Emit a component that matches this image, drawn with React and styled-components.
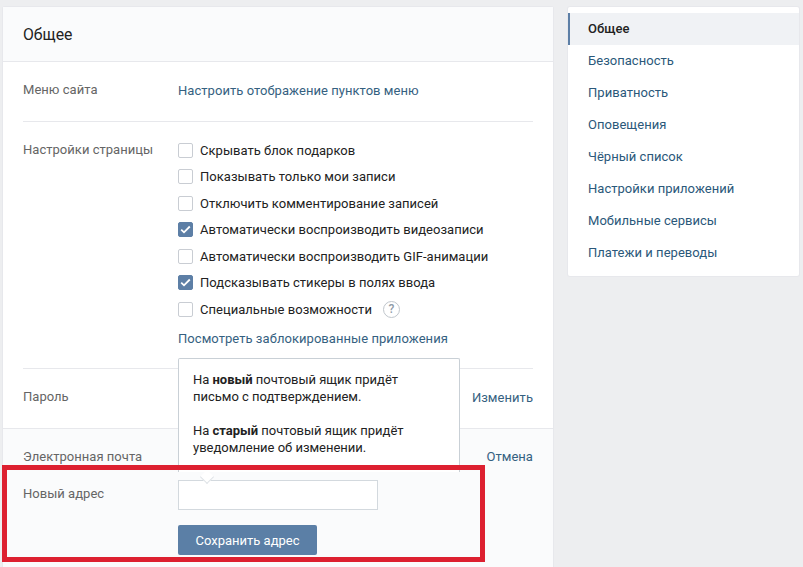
import React from "react";
import styled, { createGlobalStyle } from "styled-components";

const Global = createGlobalStyle`
  html, body { margin: 0; padding: 0; background: #edeef0; }
  body { font-family: Roboto, "Liberation Sans", sans-serif; font-size: 13px; -webkit-font-smoothing: antialiased; }
`;
const Page = styled.div`
  width: 803px; height: 567px; box-sizing: border-box; overflow: hidden; position: relative;
  display: flex; align-items: flex-start; gap: 15px; padding: 7px 4px 0 3px;
`;
const Card = styled.main`
  width: 550px; height: 560px; flex: none; background: #fff; border-radius: 2px 2px 0 0;
  box-shadow: 0 0 0 1px #e7e8ec; display: flex; flex-direction: column; position: relative;
`;
const Header = styled.header`
  height: 55px; box-sizing: border-box; flex: none; display: flex; align-items: center; padding: 1px 20px 0;
  background: #fafbfc; border-bottom: 1px solid #e7e8ec; color: #222; font-size: 15.8px;
`;
const Section = styled.section`
  margin: 0 20px; display: flex; padding: ${p => p.$pad}; height: ${p => p.$h}px; box-sizing: border-box;
  border-bottom: ${p => (p.$last ? "none" : "1px solid #e7e8ec")};
`;
const Label = styled.div`
  width: 155px; flex: none; color: #656565; letter-spacing: .03px; line-height: 17px;
  margin-top: ${p => p.$shift || 0}px;
`;
const Link = styled.a`
  color: #2b587a; letter-spacing: .05px; line-height: 17px; opacity: .95;
`;
const Side = styled(Link)` margin-left: auto; `;
const Column = styled.div` display: flex; flex-direction: column; `;
const Check = styled.div`
  height: 26.5px; display: flex; align-items: center; gap: 7px; color: #222; letter-spacing: .03px;
`;
const Box = styled.span`
  width: 15px; height: 15px; box-sizing: border-box; border-radius: 2px; flex: none;
  display: flex; align-items: center; justify-content: center;
  background: ${p => (p.$on ? "#5d7fa6" : "#fff")};
  border: 1px solid ${p => (p.$on ? "#5d7fa6" : "#c9cdd3")};
`;
const Help = styled.span`
  width: 17px; height: 17px; box-sizing: border-box; margin-left: 4px; border-radius: 50%;
  border: 1.5px solid #c0c6cc; color: #8f9ba8; font-size: 12px; font-weight: 500;
  display: flex; align-items: center; justify-content: center; letter-spacing: 0;
`;
const BlockLink = styled(Link)` margin-top: 7px; `;
const Tinted = styled.div`
  flex: 1; background: #fafbfc; border-top: 1px solid #e7e8ec; margin-top: -1px;
  padding: 19px 20px 0; display: flex; flex-direction: column;
`;
const Row = styled.div` display: flex; `;
const Form = styled.div` display: flex; margin-top: 15px; `;
const FormLabel = styled(Label)` padding-top: 5px; `;
const Input = styled.input`
  display: block; width: 200px; height: 30px; box-sizing: border-box; background: #fff;
  border: 1px solid #d3d9de; border-radius: 0; outline: none; padding: 0 8px;
`;
const Button = styled.button`
  display: block; width: 139px; height: 30px; margin-top: 15px; border: none; border-radius: 2px; background: #5b7fa6;
  color: #fff; font: 13px Roboto, sans-serif; letter-spacing: 0;
`;
const Tooltip = styled.div`
  position: absolute; left: 175px; top: 351px; width: 282px; height: 114px; box-sizing: border-box;
  background: #fff; border: 1px solid #c9d0d6; border-bottom: none; border-radius: 2px 2px 0 0; padding: 12px 14px;
  color: #222; letter-spacing: -.02px; line-height: 17px;
  p { margin: 0 0 17px; }
  b { font-weight: 700; }
`;
const Arrow = styled.div`
  position: absolute; left: 199px; top: 465px; width: 9px; height: 9px; background: #fff;
  transform: rotate(45deg); border-right: 1px solid #dfe3e7; border-bottom: 1px solid #dfe3e7;
`;
const Nav = styled.nav`
  width: 231px; height: 269px; flex: none; box-sizing: border-box; padding: 6px 0; background: #fff; border-radius: 2px;
  box-shadow: 0 0 0 1px #e7e8ec;
`;
const Item = styled.div`
  height: 32px; box-sizing: border-box; display: flex; align-items: center; padding: 0 0 2px 18px; letter-spacing: .03px;
  border-left: 2px solid ${p => (p.$active ? "#5d7fa6" : "transparent")};
  background: ${p => (p.$active ? "#f0f2f5" : "transparent")};
  color: ${p => (p.$active ? "#222" : "#2b587a")};
  font-weight: ${p => (p.$active ? 500 : 400)};
`;
const Highlight = styled.div`
  position: absolute; left: 2px; top: 465px; width: 483px; height: 97px; box-sizing: border-box;
  border: 5px solid #dd2030; pointer-events: none;
`;

const options = [
  ["Скрывать блок подарков", false],
  ["Показывать только мои записи", false],
  ["Отключить комментирование записей", false],
  ["Автоматически воспроизводить видеозаписи", true],
  ["Автоматически воспроизводить GIF-анимации", false],
  ["Подсказывать стикеры в полях ввода", true],
  ["Специальные возможности", false, true],
];
const menu = ["Общее", "Безопасность", "Приватность", "Оповещения", "Чёрный список", "Настройки приложений", "Мобильные сервисы", "Платежи и переводы"];

const Tick = () => (
  <svg width="11" height="9" viewBox="0 0 11 9" fill="none">
    <path d="M1.2 4.6 4 7.3 9.8 1.5" stroke="#fff" strokeWidth="1.8" />
  </svg>
);

export default function App() {
  return (
    <Page>
      <Global />
      <Card>
        <Header>Общее</Header>
        <Section $h={60} $pad="20px 0 0">
          <Label $shift={-1}>Меню сайта</Label>
          <Link>Настроить отображение пунктов меню</Link>
        </Section>
        <Section $h={247} $pad="15px 0 0">
          <Label $shift={4}>Настройки страницы</Label>
          <Column>
            {options.map(([text, on, help]) => (
              <Check key={text}>
                <Box $on={on}>{on && <Tick />}</Box>
                {text}
                {help && <Help>?</Help>}
              </Check>
            ))}
            <BlockLink>Посмотреть заблокированные приложения</BlockLink>
          </Column>
        </Section>
        <Section $h={60} $pad="20px 0 0" $last>
          <Label $shift={-1}>Пароль</Label>
          <Side>Изменить</Side>
        </Section>
        <Tinted>
          <Row>
            <Label>Электронная почта</Label>
            <Side>Отмена</Side>
          </Row>
          <Form>
            <FormLabel>Новый адрес</FormLabel>
            <Column>
              <Input />
              <Button>Сохранить адрес</Button>
            </Column>
          </Form>
        </Tinted>
        <Arrow />
        <Tooltip>
          <p>На <b>новый</b> почтовый ящик придёт<br />письмо с подтверждением.</p>
          <p>На <b>старый</b> почтовый ящик придёт<br />уведомление об изменении.</p>
        </Tooltip>
      </Card>
      <Nav>
        {menu.map((m, i) => <Item key={m} $active={i === 0}>{m}</Item>)}
      </Nav>
      <Highlight />
    </Page>
  );
}
